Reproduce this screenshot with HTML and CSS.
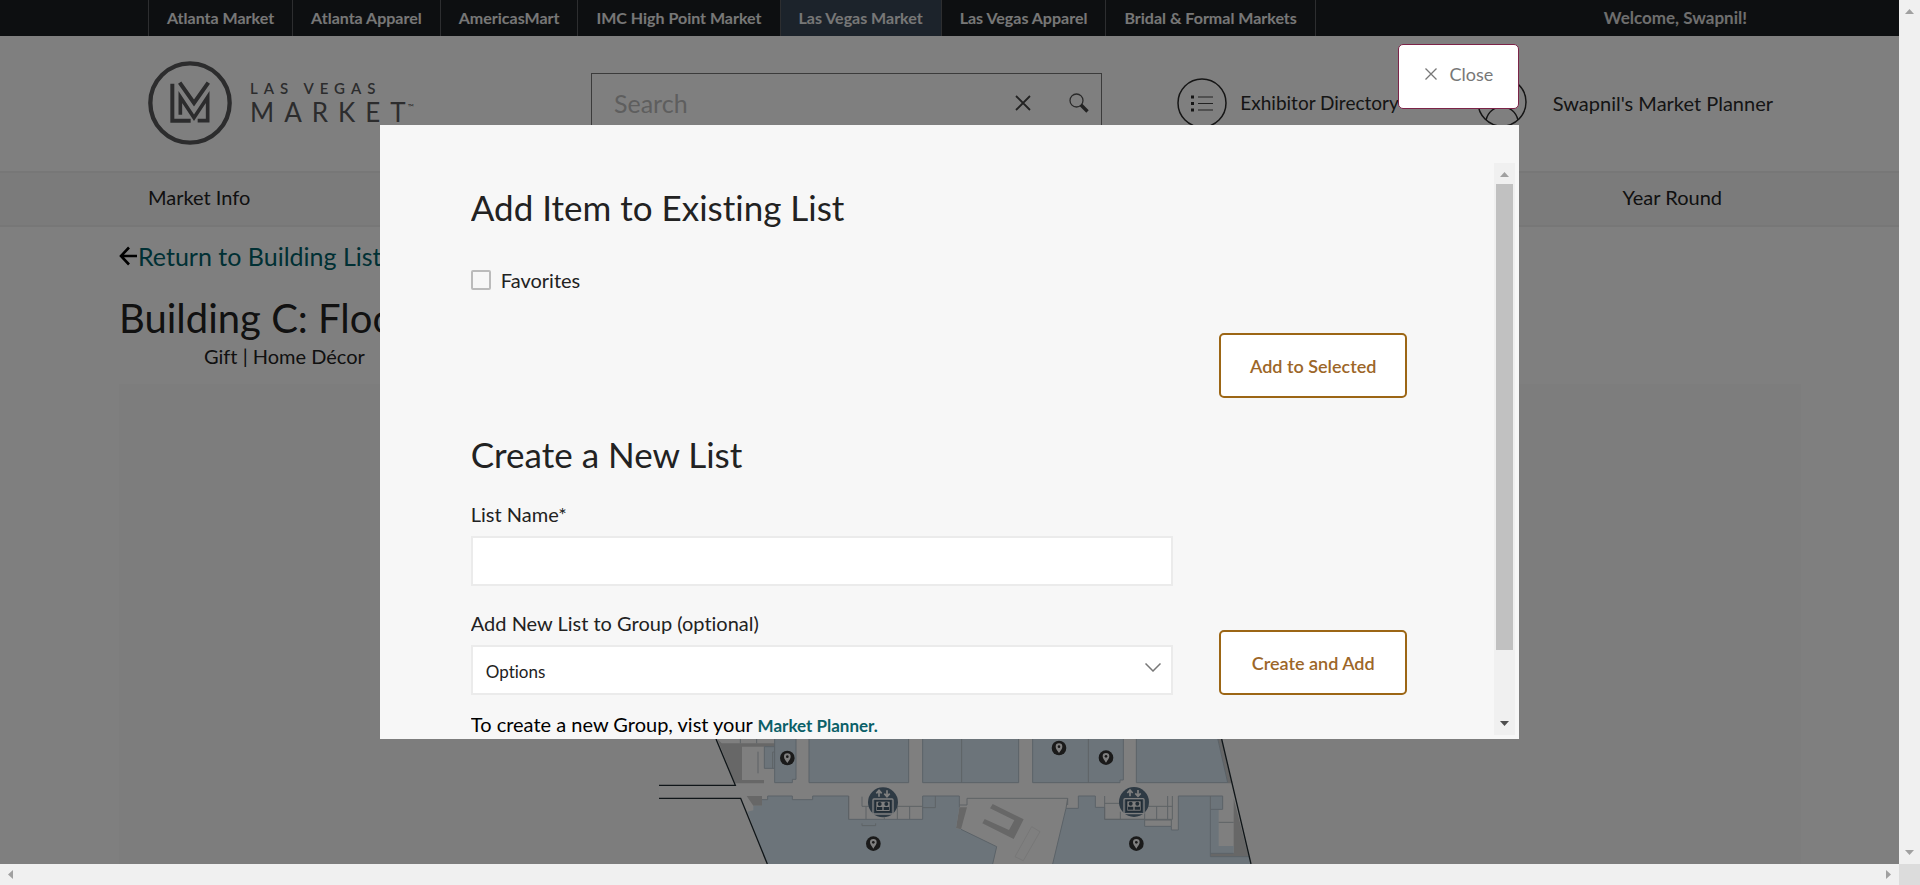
FILE: index.html
```
<!DOCTYPE html>
<html lang="en">
<head>
<meta charset="utf-8">
<title>Las Vegas Market</title>
<link rel="stylesheet" href="styles.css">
</head>
<body class="window">
<div class="viewport">
  <div class="page">
    <div class="topbar">
      <nav class="sites">
        <a class="site" href="#">Atlanta Market</a>
        <a class="site" href="#">Atlanta Apparel</a>
        <a class="site" href="#">AmericasMart</a>
        <a class="site" href="#">IMC High Point Market</a>
        <a class="site site-active" href="#">Las Vegas Market</a>
        <a class="site" href="#">Las Vegas Apparel</a>
        <a class="site" href="#">Bridal &amp; Formal Markets</a>
      </nav>
      <span class="welcome">Welcome, Swapnil!</span>
    </div>

    <header class="header">
      <a class="logo" href="#">
        <svg class="logo-mark" viewBox="54 34 252 252" aria-hidden="true">
          <circle cx="180" cy="160" r="119" stroke-width="13"/>
          <path stroke-width="12" d="M127 102V213H174l8 0"/>
          <path stroke-width="12" d="M149 99L192 160L235 99"/>
          <path stroke-width="11" d="M151 195V142L192 204L233 142V213H203"/>
        </svg>
        <span class="logo-words">
          <span class="logo-top">LAS VEGAS</span>
          <span class="logo-bottom">MARKE<span class="logo-end">T</span><sup class="tm">™</sup></span>
        </span>
      </a>
      <form class="search">
        <input class="search-input" type="text" placeholder="Search" aria-label="Search">
        <button class="icon-button" type="button" aria-label="Clear">
          <svg width="16" height="16" viewBox="0 0 16 16"><path d="M1 1L15 15M15 1L1 15" fill="none" stroke="#444" stroke-width="1.800"/></svg>
        </button>
        <button class="icon-button" type="submit" aria-label="Search">
          <svg width="20" height="20" viewBox="0 0 20 20"><circle cx="7.5" cy="7.5" r="6.5" fill="none" stroke="#555" stroke-width="1.3"/><path d="M11.8 11.8L18.5 18.5" stroke="#444" stroke-width="3.4"/></svg>
        </button>
      </form>
      <a class="tool tool-directory" href="#">
        <svg width="50" height="50" viewBox="0 0 50 50" aria-hidden="true">
          <circle cx="25" cy="25" r="24" fill="none" stroke="#2b2b2b" stroke-width="1.5"/>
          <path d="M14 17.500h3v3h-3zM14 24h3v3h-3zM14 30.500h3v3h-3z" fill="#2b2b2b"/>
          <path d="M21 19h15M21 25.500h15M21 32h15" stroke="#444" stroke-width="1.200"/>
        </svg>
        <span>Exhibitor Directory</span>
      </a>
      <a class="tool tool-planner" href="#">
        <svg width="50" height="50" viewBox="0 0 50 50" aria-hidden="true">
          <circle cx="25" cy="24" r="24" fill="none" stroke="#2b2b2b" stroke-width="1.500"/>
          <circle cx="25" cy="18" r="9" fill="none" stroke="#2b2b2b" stroke-width="1.500"/>
          <path d="M9 42C11 34 17 29 25 29S39 34 41 42" fill="none" stroke="#2b2b2b" stroke-width="1.500"/>
        </svg>
        <span>Swapnil's Market Planner</span>
      </a>
    </header>

    <nav class="mainnav">
      <a class="mainnav-link" href="#">Market Info</a>
      <a class="mainnav-link mainnav-last" href="#">Year Round</a>
    </nav>

    <main class="content">
      <div class="back">
        <svg width="18" height="20" viewBox="0 0 18 20" aria-hidden="true"><path d="M10 1.500L2 10L10 18.500M2 10H18" fill="none" stroke="#000" stroke-width="2.600"/></svg>
        <a class="back-link" href="#">Return to Building List</a>
      </div>
      <h1 class="title">Building C: Floor</h1>
      <p class="subtitle">Gift | Home Décor</p>
      <section class="map" aria-label="Floor map">
        <div class="map-shade"></div>
        <svg class="floor" viewBox="0 27 1920 375" aria-hidden="true">
          <defs>
            <g id="pin">
              <circle r="22" fill="#343434"/>
              <path d="M0 15C-5 7-10 2-10-4A10 10 0 0 1 10-4C10 2 5 7 0 15Z" fill="#fff"/>
              <circle cy="-4" r="4" fill="#343434"/>
            </g>
            <g id="lift">
              <circle r="45" fill="#5c7488"/>
              <path d="M-12-17V-33M-20-27L-12-36L-4-27M12-36V-19M4-26L12-17L20-26" fill="none" stroke="#fff" stroke-width="5"/>
              <rect x="-30" y="-10" width="60" height="45" rx="3" fill="#5c7488" stroke="#fff" stroke-width="4"/>
              <rect x="-22" y="-4" width="44" height="32" fill="#fff" stroke="#42586a" stroke-width="4"/>
              <g fill="#42586a"><circle cx="-10" cy="5" r="6"/><circle cx="10" cy="5" r="6"/><path d="M-18 23V14H-2V23ZM2 23V14H18V23Z"/></g>
            </g>
          </defs>
          <path fill="#fefefe" d="M228 27L286 166H57V205H302L382 402H1833L1745 27Z"/>
          <g fill="#cecece">
            <path d="M232 27L245 40H418V50H306V150H372V160H285Z"/>
            <path d="M320 198H366V227H340Z"/>
            <path d="M958 232H981L963 298L948 295Z"/>
            <path d="M1058 222L1151 268L1121 327L1027 280L1034 267L1107 300L1123 271L1050 235Z"/>
            <path d="M1733 27H1745L1775 160H1763Z"/>
            <path d="M1781 205L1826 380H1711V370H1781Z"/>
          </g>
          <g fill="#d8e9f5" stroke="#b6c4cf" stroke-width="3">
            <path d="M373 50H404V115H373Z"/>
            <path d="M404 25H468V148H457V158H404Z"/>
            <path d="M507 25H806V158H507Z"/>
            <path d="M848 25H1136V158H848Z"/>
            <path d="M1178 25H1450V150H1440V158H1178Z"/>
            <path d="M1489 25H1733L1763 158H1489Z"/>
            <path stroke="none" d="M383 198H457V209H518V198H626V268H848V198H958V232L948 295L963 298L1070 350L1058 402H382L322 245L340 241V227H366V209H383Z"/>
            <path d="M366 209H383V198H457V209H518V198H626V268H848V198H958V232M963 298L1070 350L1058 402" fill="none"/>
            <path stroke="none" d="M1315 198H1366V232H1394V268H1514V289H1594V300H1615V198H1748V238H1736V348H1781V370H1711V380H1826L1832 402H1238L1278 235H1315Z"/>
            <path d="M1238 402L1278 235H1315V198H1366V232H1394V268H1514V289H1594V300H1615V198H1748V238H1711V380H1826M1711 370H1781" fill="none"/>
          </g>
          <g fill="none" stroke="#bbc4ca" stroke-width="3">
            <path d="M965 27V158M1345 27V158M301 27V40M350 27V40M354 65V130M398 115V66H403"/>
            <path d="M626 198V268M666 200V229H690M770 229H848M772 229V268M809 229V268M848 233H886V198M666 280V287H707V280M678 229V268M733 262V268"/>
            <path d="M981 225V205H1283V225M958 225H981M1283 205L1278 235"/>
            <path d="M1394 198V268H1597V198M1441 245V268M1514 229V268M1550 229V268M1583 198V268M1394 220H1440M1520 229H1597M1514 270H1594V289"/>
            <path d="M1711 198V238M1736 277H1781" />
            <path d="M1175 290L1125 380L1150 392L1200 305Z" stroke="#eee"/>
          </g>
          <g fill="none" stroke="#202c32" stroke-width="4">
            <path d="M228 27L286 166H57M57 205H302L382 402M1745 27L1833 402"/>
          </g>
          <use href="#lift" x="729" y="217"/><use href="#lift" x="1482" y="216"/>
          <use href="#pin" x="442" y="84"/><use href="#pin" x="700" y="341"/>
          <use href="#pin" x="1257" y="54"/><use href="#pin" x="1398" y="83"/><use href="#pin" x="1489" y="341"/>
        </svg>
      </section>
    </main>
  </div>

  <div class="overlay">
    <div class="dialog" role="dialog" aria-label="Add item to list">
      <button class="close" type="button">
        <svg width="12" height="12" viewBox="0 0 12 12" aria-hidden="true"><path d="M.5.5L11.5 11.5M11.5.5L.5 11.5" fill="none" stroke="#777" stroke-width="1.300"/></svg>
        Close
      </button>
      <div class="panel">
        <div class="panel-body">
          <h2 class="heading">Add Item to Existing List</h2>
          <label class="check"><input class="check-box" type="checkbox"> Favorites</label>
          <button class="action action-selected" type="button">Add to Selected</button>
          <h2 class="heading heading-create">Create a New List</h2>
          <form class="create">
            <div class="fields">
              <label class="label" for="list-name">List Name*</label>
              <input class="field" id="list-name" type="text">
              <label class="label label-group" for="group">Add New List to Group (optional)</label>
              <div class="select-wrap">
                <select class="field select" id="group"><option>Options</option></select>
                <svg class="chevron" width="16" height="9" viewBox="0 0 16 9" aria-hidden="true"><path d="M.5.5L8 8L15.500.5" fill="none" stroke="#777" stroke-width="1.500"/></svg>
              </div>
            </div>
            <button class="action" type="button">Create and Add</button>
          </form>
          <p class="hint">To create a new Group, vist your <a class="hint-link" href="#">Market Planner.</a></p>
        </div>
        <div class="scroll scroll-panel" aria-hidden="true">
          <svg class="arrow" width="9" height="5" viewBox="0 0 9 5"><path d="M0 5L4.500 0L9 5Z" fill="#a0a0a0"/></svg>
          <div class="track"><div class="thumb"></div></div>
          <svg class="arrow" width="9" height="5" viewBox="0 0 9 5"><path d="M0 0L4.500 5L9 0Z" fill="#4f4f4f"/></svg>
        </div>
      </div>
    </div>
  </div>
</div>
<div class="scroll" aria-hidden="true">
  <svg class="arrow" width="9" height="5" viewBox="0 0 9 5"><path d="M0 5L4.500 0L9 5Z" fill="#a0a0a0"/></svg>
  <svg class="arrow" width="9" height="5" viewBox="0 0 9 5"><path d="M0 0L4.500 5L9 0Z" fill="#a0a0a0"/></svg>
</div>
<div class="scroll scroll-x" aria-hidden="true">
  <svg class="arrow" width="5" height="9" viewBox="0 0 5 9"><path d="M5 0L0 4.500L5 9Z" fill="#a0a0a0"/></svg>
  <svg class="arrow" width="5" height="9" viewBox="0 0 5 9"><path d="M0 0L5 4.500L0 9Z" fill="#a0a0a0"/></svg>
</div>
<div class="corner"></div>
</body>
</html>
```
FILE: styles.css
```
* { box-sizing: border-box; }

body, h1, h2, p { margin: 0; font-weight: 400; }

.window {
  display: grid;
  grid-template: minmax(0, 1fr) 21px / minmax(0, 1fr) 21px;
  height: 100vh;
  overflow: hidden;
  background: #fff;
  color: #222;
  font: 20px/24px Lato, "Open Sans", sans-serif;
  font-variant-ligatures: none;
}

a { color: inherit; text-decoration: none; }

button, input, select { font: inherit; color: inherit; }

.viewport { position: relative; overflow: hidden; }

/* Top bar */
.topbar {
  display: flex;
  justify-content: space-between;
  height: 36px;
  padding: 0 152px 0 148px;
  background: #1b1f22;
  color: #fff;
  font-size: 16px;
  font-weight: 700;
  line-height: 35px;
}

.sites { display: flex; border-left: 1px solid #5a5d60; }
.site { padding: 0 18px; border-right: 1px solid #5a5d60; color: #eee; }
.site-active { background: #384656; }
.welcome { color: #ddd; font-size: 17px; }

/* Header */
.header {
  display: flex;
  align-items: center;
  height: 135px;
  padding: 0 126px 1px 148px;
  white-space: nowrap;
}

.logo { display: flex; gap: 18px; width: 443px; color: #58595b; }
.logo-mark { width: 84px; height: 84px; fill: none; stroke: #58595b; }
.logo-words { display: flex; flex-direction: column; padding-top: 17px; }
.logo-top { font-size: 15px; font-weight: 600; line-height: 20px; letter-spacing: 6px; }
.logo-bottom { font-size: 26px; line-height: 28px; letter-spacing: 10px; }
.logo-end { letter-spacing: 0; }
.tm { font-size: 8px; line-height: 8px; vertical-align: 12px; margin-left: 2px; letter-spacing: 0; }

.search {
  display: flex;
  align-items: center;
  flex: 1;
  height: 60px;
  padding-right: 2px;
  border: 1px solid #777;
}
.search-input {
  flex: 1;
  min-width: 0;
  padding: 0 0 0 22px;
  border: 0;
  background: none;
  font-size: 25px;
}
.search-input::placeholder { color: #bdbdbd; opacity: 1; }
.icon-button {
  display: flex;
  justify-content: center;
  align-items: center;
  width: 40px;
  height: 40px;
  margin-left: 16px;
  padding: 0;
  border: 0;
  background: none;
}

.tool { display: flex; align-items: center; color: #2b2b2b; }
.tool-directory { gap: 13px; margin-left: 75px; font-size: 19px; }
.tool-planner { gap: 26px; margin-left: 78px; }

/* Main navigation */
.mainnav {
  display: flex;
  justify-content: space-between;
  padding: 12px 148px 16px;
  border-top: 2px solid #eee;
  border-bottom: 2px solid #eee;
  background: #f7f7f7;
}
.mainnav-last { padding-right: 29px; }

/* Page content */
.content { padding: 13px 98px 0 119px; }
.back { display: flex; align-items: center; gap: 1px; font-size: 25px; line-height: 32px; }
.back-link { color: #006169; }
.title { margin-top: 22px; font-size: 40px; line-height: 48px; }
.subtitle { margin: 2px 0 0 85px; }
.map {
  display: flex;
  flex-direction: column;
  align-items: center;
  height: 900px;
  margin-top: 16px;
  background: #fbfbfb;
}
.map-shade { align-self: stretch; height: 355px; }
.floor { width: 640px; height: 125px; }

/* Dialog */
.overlay {
  position: absolute;
  inset: 0;
  display: flex;
  justify-content: center;
  padding: 44px 0 125px;
  background: rgba(0, 0, 0, .5);
}
.dialog { display: flex; flex-direction: column; gap: 16px; width: 60%; }

.close {
  display: flex;
  align-self: flex-end;
  align-items: center;
  gap: 12px;
  height: 65px;
  padding: 0 25px 6px 26px;
  border: 1px solid #7c2348;
  border-radius: 5px;
  background: #fff;
  color: #777;
  font-size: 18px;
}

.panel {
  display: flex;
  flex: 1;
  min-height: 0;
  padding: 38px 4px 0 91px;
  background: #f7f7f7;
}
.panel-body { flex: 1; padding: 22px 87px 0 0; overflow: hidden; }

.heading { font-size: 35px; line-height: 44px; }
.heading-create { margin-top: 34px; }

.check { display: flex; align-items: center; gap: 10px; margin-top: 39px; }
.check-box {
  width: 20px;
  height: 20px;
  margin: 0;
  border: 2px solid #bbb;
  border-radius: 2px;
  background: #f7f7f7;
  appearance: none;
}

.action {
  width: 188px;
  height: 65px;
  border: 2px solid #9c6615;
  border-radius: 5px;
  background: #fff;
  color: #9c6628;
  font-size: 18px;
  font-weight: 600;
}
.action-selected { display: block; margin: 41px 0 0 auto; }

.create {
  display: grid;
  grid-template-columns: 1fr auto;
  align-items: end;
  gap: 46px;
  margin-top: 26px;
}
.fields { display: flex; flex-direction: column; }
.label { margin-bottom: 10px; }
.label-group { margin-top: 25px; }
.field {
  width: 100%;
  height: 50px;
  padding: 0 13px;
  border: 2px solid #ebebeb;
  border-radius: 0;
  background: #fff;
}
.select-wrap { position: relative; display: flex; }
.select { padding-top: 4px; font-size: 17px; appearance: none; }
.chevron { position: absolute; top: 18px; right: 12px; pointer-events: none; }

.hint { margin-top: 17px; color: #000; white-space: nowrap; }
.hint-link { color: #0b6068; font-size: 17px; font-weight: 700; }

/* Scroll bars */
.scroll {
  display: flex;
  flex-direction: column;
  align-items: center;
  justify-content: space-between;
  width: 21px;
  padding: 9px 0;
  background: #f0f0f0;
}
.scroll-panel { gap: 7px; margin-bottom: 4px; }
.scroll-x { flex-direction: row; width: auto; padding: 0 8px; }
.arrow { flex: none; }
.track { flex: 1; }
.thumb { width: 17px; height: 88%; background: #c1c1c1; }
.corner { background: #dcdcdc; }
```
